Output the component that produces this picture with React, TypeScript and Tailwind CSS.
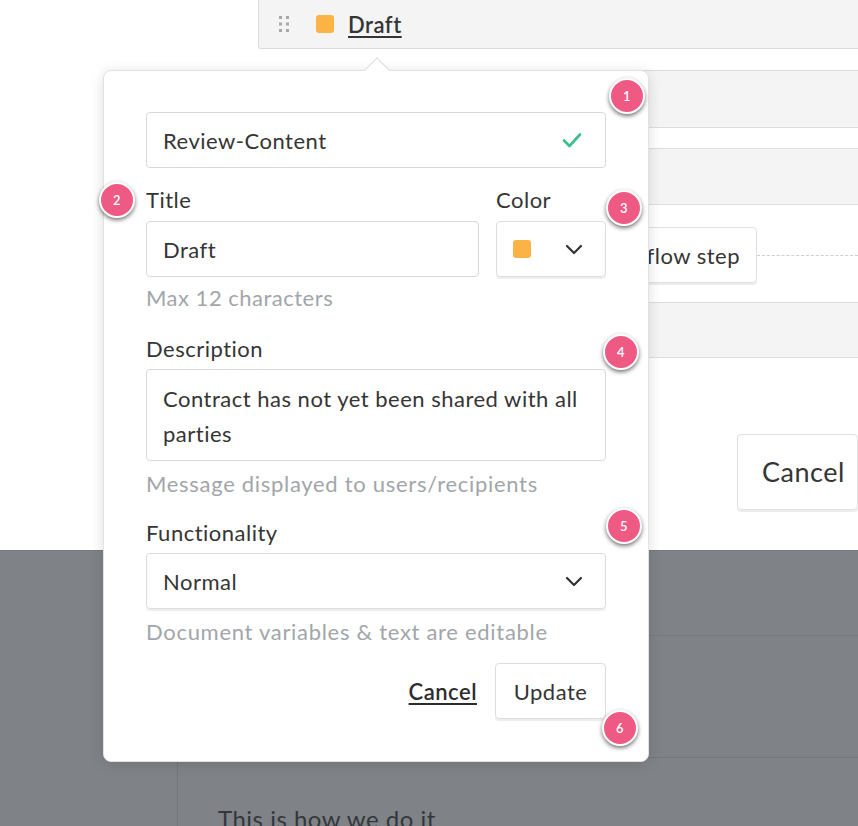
import React from "react";

const Badge: React.FC<{ n: number; className: string }> = ({ n, className }) => (
    <div
        className={`absolute w-9 h-9 rounded-full bg-[#ef5a84] border-2 border-white shadow-[0_2px_4px_rgba(0,0,0,0.55)] flex items-center justify-center text-white text-[13px] font-semibold leading-none ${className}`}
    >
        {n}
    </div>
);

const Chevron = () => (
    <svg width="18" height="11" viewBox="0 0 18 11" fill="none">
        <path d="M2 2l7 7 7-7" stroke="#333" strokeWidth="2.2" strokeLinecap="round" strokeLinejoin="round" />
    </svg>
);

const Check = () => (
    <svg width="20" height="16" viewBox="0 0 20 16" fill="none">
        <path d="M2 8.5l5.5 5.5L18 2.5" stroke="#3cbf8c" strokeWidth="2.6" strokeLinecap="round" strokeLinejoin="round" />
    </svg>
);

const DragDots = () => (
    <svg width="12" height="18" viewBox="0 0 12 18" fill="#a9a9a9">
        <rect x="1" y="1" width="3" height="3" />
        <rect x="8" y="1" width="3" height="3" />
        <rect x="1" y="7.5" width="3" height="3" />
        <rect x="8" y="7.5" width="3" height="3" />
        <rect x="1" y="14" width="3" height="3" />
        <rect x="8" y="14" width="3" height="3" />
    </svg>
);

const Swatch = () => <div className="w-[18px] h-[18px] rounded-[3px] bg-[#fbb345]" />;

const App: React.FC = () => {
    return (
        <div className="relative w-[858px] h-[826px] overflow-hidden bg-white text-[#353535] tracking-[0.5px] font-[Lato,'Open_Sans',sans-serif]">
            {/* page behind the popover */}
            <div className="h-[550px] flex flex-col pl-[258px]">
                <div className="h-[49px] bg-[#f4f4f4] border-l border-b border-[#dcdcdc] rounded-bl-[3px] flex items-center pl-[19px]">
                    <DragDots />
                    <div className="ml-[26px]">
                        <Swatch />
                    </div>
                    <span className="ml-[14px] text-[22px] font-semibold underline underline-offset-[3px] decoration-[1.5px]">Draft</span>
                </div>

                <div className="mt-[21px] h-[58px] bg-[#f4f4f4] border-t border-b border-[#dddddd]" />
                <div className="mt-[20px] h-[57px] bg-[#f4f4f4] border-t border-b border-[#dddddd]" />

                <div className="mt-[22px] h-[56px] flex items-center">
                    <div className="ml-[259px] w-[240px] h-full rounded-[4px] border border-[#e0e0e0] shadow-[0_2px_0_rgba(0,0,0,0.07)] flex items-center justify-end pr-[16px] text-[22px] whitespace-nowrap">
                        Add workflow step
                    </div>
                    <div className="flex-1 border-t border-dashed border-[#cfcfcf]" />
                </div>

                <div className="mt-[19px] h-[56px] bg-[#f4f4f4] border-t border-b border-[#dddddd]" />

                <div className="mt-[76px] h-[76px] flex">
                    <div className="ml-[479px] w-[160px] h-full rounded-[4px] border border-[#e0e0e0] shadow-[0_2px_0_rgba(0,0,0,0.07)] flex items-center pl-[24px] text-[27px]">
                        Cancel
                    </div>
                </div>
            </div>

            {/* dimmed area */}
            <div className="h-[276px] bg-[#7f8387] border-t border-[#767a7e]">
                <div className="ml-[177px] h-full border-l border-[#74787c] flex flex-col">
                    <div className="h-[85px] shrink-0 border-b border-[#74787c]" />
                    <div className="h-[122px] shrink-0 border-b border-[#74787c]" />
                    <div className="shrink-0 pl-[40px] pt-[46px] text-[24px] leading-[30px] text-[#33373b]">This is how we do it</div>
                </div>
            </div>

            {/* popover */}
            <div className="absolute left-[103px] top-[70px] w-[546px] h-[692px] bg-white rounded-[8px] border border-[#e2e2e2] shadow-[0_2px_14px_rgba(0,0,0,0.13)] px-[42px] pt-[41px] flex flex-col text-[22px]">
                <div className="absolute left-[264px] -top-[10px] w-[18px] h-[18px] rotate-45 bg-white border-t border-l border-[#dcdcdc]" />

                <div className="h-[56px] rounded-[4px] border border-[#d9d9d9] flex items-center justify-between pl-[16px] pr-[23px]">
                    <span>Review-Content</span>
                    <Check />
                </div>

                <div className="flex gap-[17px]">
                    <div className="w-[333px] flex flex-col">
                        <label className="mt-[20px] leading-[24px]">Title</label>
                        <div className="mt-[9px] h-[56px] rounded-[4px] border border-[#d9d9d9] flex items-center pl-[16px]">Draft</div>
                        <div className="mt-[9px] leading-[24px] text-[#a2a6aa]">Max 12 characters</div>
                    </div>
                    <div className="w-[110px] flex flex-col">
                        <label className="mt-[20px] leading-[24px]">Color</label>
                        <div className="mt-[9px] h-[56px] rounded-[4px] border border-[#dedede] shadow-[0_2px_0_rgba(0,0,0,0.07)] flex items-center justify-between pl-[16px] pr-[22px]">
                            <Swatch />
                            <Chevron />
                        </div>
                    </div>
                </div>

                <label className="mt-[27px] leading-[24px]">Description</label>
                <div className="mt-[8px] h-[92px] rounded-[4px] border border-[#d9d9d9] pl-[16px] pr-[12px] pt-[11px] leading-[35px]">
                    Contract has not yet been shared with all parties
                </div>
                <div className="mt-[11px] leading-[24px] text-[#a2a6aa] tracking-[0.7px]">Message displayed to users/recipients</div>

                <label className="mt-[25px] leading-[24px]">Functionality</label>
                <div className="mt-[8px] h-[56px] rounded-[4px] border border-[#dedede] shadow-[0_2px_0_rgba(0,0,0,0.07)] flex items-center justify-between pl-[16px] pr-[22px]">
                    <span>Normal</span>
                    <Chevron />
                </div>
                <div className="mt-[11px] leading-[24px] text-[#a2a6aa] tracking-[0.7px]">Document variables &amp; text are editable</div>

                <div className="mt-[19px] flex items-center justify-end gap-[18px]">
                    <button className="font-semibold underline underline-offset-[3px] decoration-[1.5px] text-[#2d2d2d] tracking-[0.5px]">Cancel</button>
                    <button className="w-[111px] h-[56px] rounded-[4px] border border-[#dedede] shadow-[0_2px_0_rgba(0,0,0,0.07)] flex items-center justify-center tracking-[0.5px]">
                        Update
                    </button>
                </div>
            </div>

            <Badge n={1} className="left-[609px] top-[78px]" />
            <Badge n={2} className="left-[99px] top-[182px]" />
            <Badge n={3} className="left-[606px] top-[190px]" />
            <Badge n={4} className="left-[603px] top-[334px]" />
            <Badge n={5} className="left-[606px] top-[508px]" />
            <Badge n={6} className="left-[602px] top-[710px]" />
        </div>
    );
};

export default App;
